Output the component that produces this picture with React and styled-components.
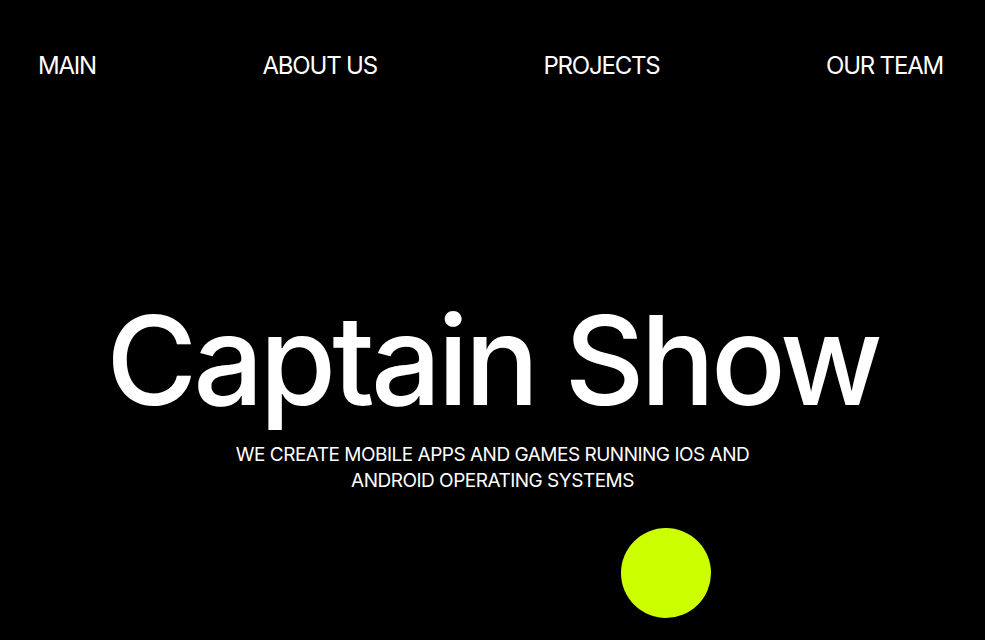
import React from "react";
import styled, { createGlobalStyle } from "styled-components";

const Global = createGlobalStyle`
  html, body { margin: 0; padding: 0; background: #000; }
  body { font-family: Inter, "Noto Sans", sans-serif; color: #fff; }
`;

const Page = styled.div`
  width: 985px;
  height: 640px;
  background: #000;
  display: flex;
  flex-direction: column;
  overflow: hidden;
`;

const Nav = styled.nav`
  display: flex;
  justify-content: space-between;
  align-items: center;
  padding: 52px 42px 0 38px;
`;

const NavLink = styled.a`
  font-size: 24px;
  font-weight: 400;
  letter-spacing: -1.2px;
  color: #fff;
  text-decoration: none;
  line-height: 28px;
`;

const Hero = styled.section`
  display: flex;
  flex-direction: column;
  align-items: center;
  padding-top: 220px;
`;

const Title = styled.h1`
  margin: 0;
  font-size: 124px;
  font-weight: 500;
  letter-spacing: -4px;
  line-height: 120px;
  color: #fff;
`;

const Subtitle = styled.p`
  margin: 22px 0 0;
  width: 540px;
  text-align: center;
  font-size: 19px;
  line-height: 26px;
  letter-spacing: -0.5px;
  font-weight: 400;
  color: #fff;
`;

const Dot = styled.div`
  align-self: flex-start;
  width: 90px;
  height: 90px;
  border-radius: 50%;
  background: #ccff00;
  margin: 34px 0 0 621px;
`;

export default function App() {
  const links = ["MAIN", "ABOUT US", "PROJECTS", "OUR TEAM"];
  return (
    <Page>
      <Global />
      <Nav>
        {links.map((l) => (
          <NavLink key={l} href="#">{l}</NavLink>
        ))}
      </Nav>
      <Hero>
        <Title>Captain Show</Title>
        <Subtitle>
          WE CREATE MOBILE APPS AND GAMES RUNNING IOS AND ANDROID OPERATING SYSTEMS
        </Subtitle>
        <Dot />
      </Hero>
    </Page>
  );
}
